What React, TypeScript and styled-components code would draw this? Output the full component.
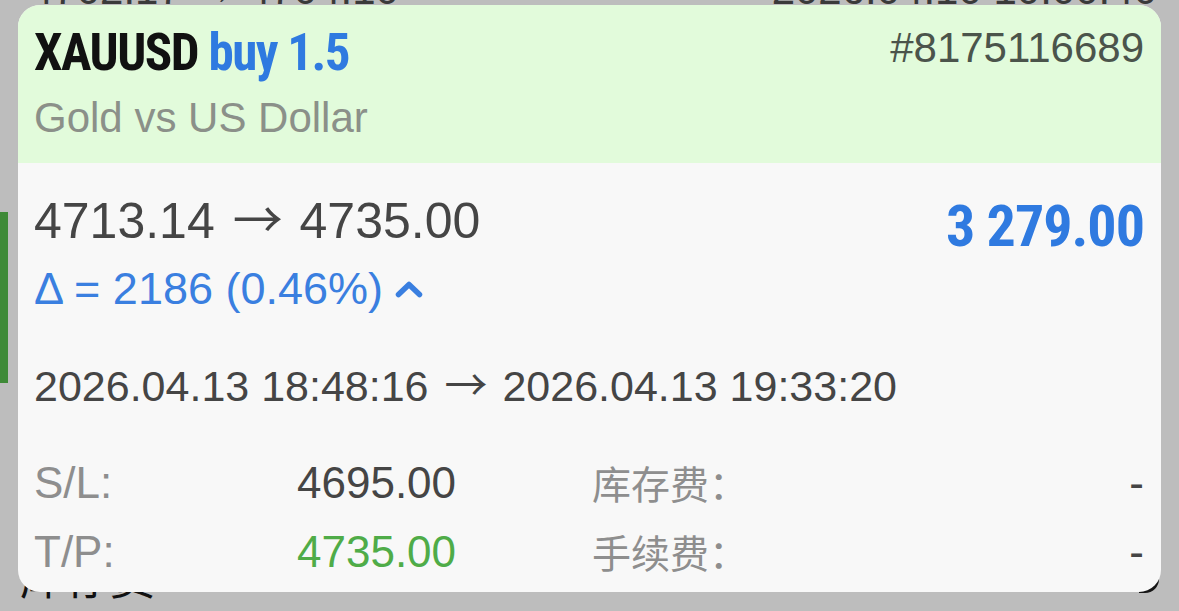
import React from "react";
import styled, { createGlobalStyle } from "styled-components";

const Global = createGlobalStyle`
  html, body { margin: 0; padding: 0; }
  body {
    width: 1179px;
    height: 611px;
    overflow: hidden;
    background: #bdbdbd;
    font-family: "Liberation Sans", Arial, sans-serif;
  }
`;

const condensed = `"Roboto Condensed", "DejaVu Sans Condensed", "Liberation Sans Narrow", Roboto, sans-serif`;

const Screen = styled.div`
  position: relative;
  width: 1179px;
  height: 611px;
  overflow: hidden;
  background: #bdbdbd;
`;

const BgList = styled.div`
  display: flex;
  flex-direction: column;
`;

const BgTopRow = styled.div`
  display: flex;
  justify-content: space-between;
  padding: 0 22px 0 30px;
  margin-top: -35px;
  font-size: 42px;
  line-height: 50px;
  color: #3a3a3a;
`;

const BgMarker = styled.div`
  width: 8px;
  height: 171px;
  margin-top: 197px;
  background: #3e8a37;
`;

const BgBottomRow = styled.div`
  margin-top: 168px;
  padding-left: 20px;
  font-family: "Noto Sans CJK SC", sans-serif;
  font-size: 45px;
  line-height: 50px;
  color: #111;
`;

const CornerShade = styled.div`
  position: absolute;
  left: 1139px;
  top: 573px;
  width: 20px;
  height: 20px;
  border-radius: 0 0 14px 0;
  background: #151515;
`;

const Card = styled.div`
  position: absolute;
  top: 5px;
  left: 18px;
  width: 1143px;
  height: 587px;
  border-radius: 22px;
  overflow: hidden;
  display: flex;
  flex-direction: column;
  background: #f8f8f8;
`;

const Header = styled.div`
  height: 158px;
  box-sizing: border-box;
  padding: 18px 17px 0 16px;
  background: #e2fbdb;
`;

const TitleRow = styled.div`
  display: flex;
  justify-content: space-between;
  align-items: flex-start;
`;

const Title = styled.div`
  font-family: ${condensed};
  font-stretch: condensed;
  font-weight: 700;
  font-size: 51px;
  letter-spacing: -1.5px;
  line-height: 60px;
  color: #111;
`;

const Accent = styled.span`
  color: #2f7ae0;
`;

const Ticket = styled.div`
  font-size: 42px;
  line-height: 50px;
  color: #4b544b;
`;

const Subtitle = styled.div`
  margin-top: 7px;
  font-size: 42px;
  line-height: 56px;
  color: #8b9089;
`;

const Body = styled.div`
  flex: 1;
  padding: 28px 17px 0 16px;
  display: flex;
  flex-direction: column;
`;

const PriceRow = styled.div`
  height: 60px;
  display: flex;
  justify-content: space-between;
  align-items: flex-start;
`;

const Prices = styled.div`
  font-size: 50px;
  line-height: 60px;
  color: #454545;
`;

const Arrow = styled.span`
  font-family: "Noto Sans CJK SC", sans-serif;
  line-height: 0;
  margin: 0 3px 0 4px;
`;

const Profit = styled.div`
  margin-top: 5px;
  font-family: ${condensed};
  font-stretch: condensed;
  font-weight: 700;
  font-size: 58px;
  letter-spacing: -1px;
  line-height: 60px;
  color: #2f7ae0;
`;

const DeltaRow = styled.div`
  margin-top: 13px;
  display: flex;
  align-items: center;
  gap: 12px;
  font-size: 45px;
  line-height: 50px;
  color: #3a7fe0;
`;

const DateRow = styled.div`
  margin-top: 47px;
  font-size: 43px;
  line-height: 50px;
  color: #454545;
`;

const Grid = styled.div`
  margin-top: 37px;
  display: grid;
  grid-template-columns: 263px 295px 1fr auto;
  grid-auto-rows: 69px;
  font-size: 44px;
  line-height: 69px;
`;

const Label = styled.div<{ $cjk?: boolean }>`
  color: #8e8e8e;
  font-family: ${(p) =>
    p.$cjk ? `"Noto Sans CJK SC", sans-serif` : `"Liberation Sans", Arial, sans-serif`};
  font-size: ${(p) => (p.$cjk ? "39px" : "44px")};
`;

const Value = styled.div<{ $tone?: "green" | "dark"; $right?: boolean }>`
  color: ${(p) => (p.$tone === "green" ? "#4fac48" : "#454545")};
  text-align: ${(p) => (p.$right ? "right" : "left")};
`;

const Chevron = () => (
  <svg width="28" height="18" viewBox="0 0 28 18">
    <polyline
      points="3.5,14.5 14,4.5 24.5,14.5"
      fill="none"
      stroke="#3a7fe0"
      strokeWidth="5.5"
      strokeLinecap="round"
      strokeLinejoin="round"
    />
  </svg>
);

export default function App() {
  return (
    <>
      <Global />
      <Screen>
        <BgList>
          <BgTopRow>
            <span>4702.17 → 4704.10</span>
            <span>2026.04.10 10:00:40</span>
          </BgTopRow>
          <BgMarker />
          <BgBottomRow>库存费</BgBottomRow>
        </BgList>
        <CornerShade />
        <Card>
          <Header>
            <TitleRow>
              <Title>
                XAUUSD <Accent>buy 1.5</Accent>
              </Title>
              <Ticket>#8175116689</Ticket>
            </TitleRow>
            <Subtitle>Gold vs US Dollar</Subtitle>
          </Header>
          <Body>
            <PriceRow>
              <Prices>
                4713.14 <Arrow>→</Arrow> 4735.00
              </Prices>
              <Profit>3 279.00</Profit>
            </PriceRow>
            <DeltaRow>
              <span>Δ = 2186 (0.46%)</span>
              <Chevron />
            </DeltaRow>
            <DateRow>
              2026.04.13 18:48:16 <Arrow>→</Arrow> 2026.04.13 19:33:20
            </DateRow>
            <Grid>
              <Label>S/L:</Label>
              <Value>4695.00</Value>
              <Label $cjk>库存费：</Label>
              <Value $right>-</Value>
              <Label>T/P:</Label>
              <Value $tone="green">4735.00</Value>
              <Label $cjk>手续费：</Label>
              <Value $right>-</Value>
            </Grid>
          </Body>
        </Card>
      </Screen>
    </>
  );
}
